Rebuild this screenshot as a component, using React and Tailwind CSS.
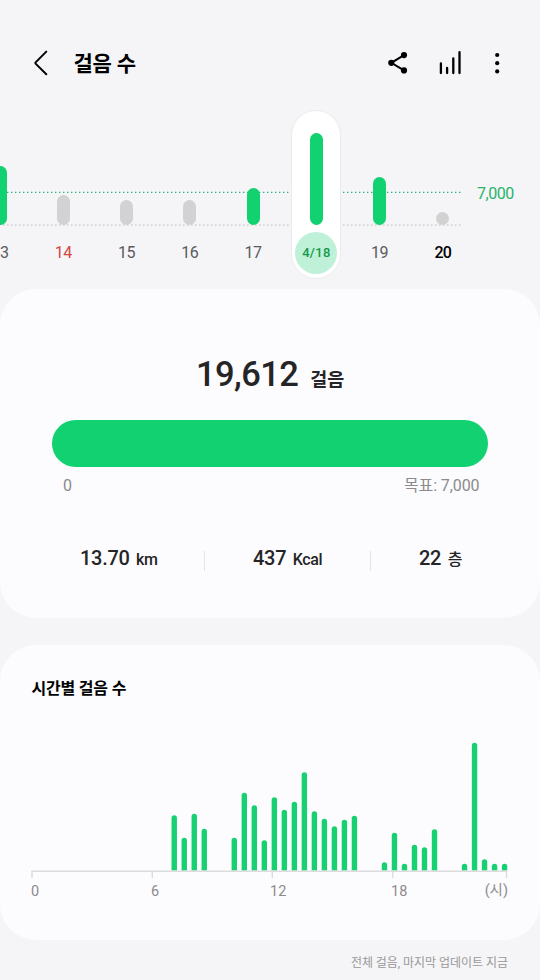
import { clsx } from "clsx";

const days = [
  { label: "13", height: 59, reached: true },
  { label: "14", height: 30, holiday: true },
  { label: "15", height: 25 },
  { label: "16", height: 25 },
  { label: "17", height: 37, reached: true },
  { label: "4/18", height: 92, reached: true, selected: true },
  { label: "19", height: 48, reached: true },
  { label: "20", height: 13, today: true },
];

// steps per half hour: [slot, bar height]
const halfHours = [
  [14, 55.5], [15, 33], [16, 57], [17, 42],
  [20, 33], [21, 78], [22, 65.5], [23, 30.5],
  [24, 73.5], [25, 61], [26, 69], [27, 98.5],
  [28, 59.5], [29, 52], [30, 44.5], [31, 51],
  [32, 55], [35, 8.5], [36, 38], [37, 7],
  [38, 26], [39, 23.5], [40, 41.5], [43, 7],
  [44, 128], [45, 11.5], [46, 7], [47, 7],
];

const ticks = [1, 121.3, 241.3, 361.8, 475.5];

function Header() {
  return (
    <header className="flex h-[46px] items-center pl-[32px] pr-[39px]">
      <button aria-label="Back">
        <svg width="18" height="28" viewBox="0 0 18 28" fill="none" stroke="#000" strokeWidth="2" strokeLinecap="round" strokeLinejoin="round">
          <path d="M14.3 2.6 L3.6 13.4 Q3 14 3.6 14.6 L14.3 25.2" />
        </svg>
      </button>
      <h1 className="mt-[3px] ml-[23.5px] text-[21px] leading-none font-bold tracking-[-0.2px] text-black">걸음 수</h1>
      <div className="ml-auto flex items-center">
        <button aria-label="Share">
          <svg width="22" height="24" viewBox="0 0 22 24" fill="#000">
            <path d="M17 4.1 L4.3 11.8 L17 19.4" fill="none" stroke="#000" strokeWidth="2" />
            <circle cx="17" cy="4.1" r="3.1" />
            <circle cx="4.3" cy="11.8" r="3.1" />
            <circle cx="17" cy="19.4" r="3.1" />
          </svg>
        </button>
        <button aria-label="Statistics" className="ml-[29px]">
          <svg width="24" height="26" viewBox="0 0 24 26" fill="none" stroke="#000" strokeWidth="2.3" strokeLinecap="round">
            <path d="M2.9 13.4 V23 M9.1 18 V23 M15.3 8.3 V23 M21.5 2.2 V23" />
          </svg>
        </button>
        <button aria-label="More options" className="ml-[31px]">
          <svg width="8" height="24" viewBox="0 0 8 24" fill="#000">
            <circle cx="4.2" cy="4" r="2.1" />
            <circle cx="4.2" cy="12.2" r="2.1" />
            <circle cx="4.2" cy="20.4" r="2.1" />
          </svg>
        </button>
      </div>
    </header>
  );
}

function Day({ day }) {
  return (
    <div className="flex w-[63.25px] shrink-0 justify-center">
      <div
        className={clsx(
          "flex h-[169px] w-[50px] flex-col items-center justify-end rounded-full border pb-[4px]",
          day.selected ? "border-[#ebebed] bg-white" : "border-transparent"
        )}
      >
        <div
          className={clsx("w-[13px] rounded-full", day.reached ? "bg-[#12d170]" : "bg-[#d2d2d2]")}
          style={{ height: day.height }}
        />
        <div
          className={clsx(
            "mt-[7px] flex size-[42px] items-center justify-center rounded-full",
            day.selected && "bg-[#bff0d8] text-[13px] font-medium tracking-[0.3px] text-[#14984a]",
            !day.selected && "text-[16px] tracking-[-0.3px]",
            day.holiday && "text-[#d0483e]",
            day.today && "font-medium tracking-[-0.6px] text-black",
            !day.selected && !day.holiday && !day.today && "text-[#5a5a5c]"
          )}
        >
          {day.label}
        </div>
      </div>
    </div>
  );
}

function DayStrip() {
  return (
    <section className="relative mt-[24px] h-[169px] overflow-hidden">
      <svg className="absolute top-0 left-0" width="540" height="169">
        <line x1="3" x2="462" y1="82.4" y2="82.4" stroke="#2fb577" strokeWidth="1.4" strokeDasharray="1.4 2.6" />
        <line x1="3" x2="462" y1="115" y2="115" stroke="#cfcfd1" strokeWidth="1.4" strokeDasharray="1.6 2.4" />
      </svg>
      <div className="relative ml-[-31.5px] flex">
        {days.map((day) => (
          <Day key={day.label} day={day} />
        ))}
        <span className="mt-[74px] ml-[2.5px] text-[16px] leading-[19px] tracking-[-0.45px] text-[#27b36b]">7,000</span>
      </div>
    </section>
  );
}

function Stat({ value, unit, className }) {
  return (
    <div className={clsx("flex items-baseline text-[#252528]", className)}>
      <span className="text-[20px] leading-6 font-medium tracking-[-0.3px]">{value}</span>
      <span className="ml-[6.5px] text-[16px] font-medium tracking-[-0.35px]">{unit}</span>
    </div>
  );
}

function StepSummary() {
  return (
    <section className="mt-[10px] h-[329px] rounded-[36px] bg-[#fcfcfe] pt-[65px]">
      <div className="flex items-baseline pl-[196px] text-[#252528]">
        <span className="text-[34.5px] leading-[41px] font-medium tracking-[-0.6px]">19,612</span>
        <span className="ml-[12px] text-[18.5px] leading-none font-bold">걸음</span>
      </div>
      <div className="mx-[52px] mt-[25px] h-[47px] rounded-full bg-[#12d170]" />
      <div className="mt-[9px] flex justify-between pr-[60.5px] pl-[63px] text-[16px] leading-[20px] tracking-[-0.1px] text-[#8b8b8d]">
        <span>0</span>
        <span>목표: 7,000</span>
      </div>
      <div className="mt-[51px] flex h-[24px] items-center">
        <Stat value="13.70" unit="km" className="w-[204px] pl-[80px]" />
        <div className="mt-[3px] h-[20px] w-px bg-[#e4e4e6]" />
        <Stat value="437" unit="Kcal" className="w-[165px] pl-[48px]" />
        <div className="mt-[3px] h-[20px] w-px bg-[#e4e4e6]" />
        <Stat value="22" unit="층" className="pl-[48px]" />
      </div>
    </section>
  );
}

function HourlySteps() {
  return (
    <section className="mt-[27px] h-[295px] rounded-[36px] bg-[#fcfcfe] px-[31px] pt-[34px]">
      <h2 className="pl-[0.5px] text-[16px] leading-[20px] font-bold tracking-[-0.2px] text-black">시간별 걸음 수</h2>
      <svg className="mt-[41px] block" width="478" height="140" viewBox="0 0 478 140">
        {halfHours.map(([slot, height]) => {
          const x = 0.4 + slot * 10.01;
          const top = 130.7 - height;
          return (
            <path
              key={slot}
              d={`M${x} 130.5 V${top + 2.7} a2.7 2.7 0 0 1 5.4 0 V130.5 Z`}
              fill="#16d071"
            />
          );
        })}
        <path d="M0.4 131.2 H476.2" stroke="#dcdcde" strokeWidth="1.5" />
        {ticks.map((x) => (
          <path key={x} d={`M${x} 131 V138`} stroke="#dcdcde" strokeWidth="1.4" />
        ))}
      </svg>
      <div className="mt-[2px] flex text-[14.5px] leading-[20px] text-[#8b8b8d]">
        <span className="w-[120px]">0</span>
        <span className="w-[119px]">6</span>
        <span className="w-[121px]">12</span>
        <span>18</span>
        <span className="mt-[-1px] ml-auto pr-px">(시)</span>
      </div>
    </section>
  );
}

export default function App() {
  return (
    <div className="h-[980px] w-[540px] overflow-hidden bg-[#f5f5f7] pt-[40px] font-[Roboto,'Noto_Sans_CJK_KR',sans-serif]">
      <Header />
      <DayStrip />
      <StepSummary />
      <HourlySteps />
      <p className="mt-[14px] pr-[32px] text-right text-[12px] leading-[18px] tracking-[-0.04px] text-[#98989a]">
        전체 걸음, 마지막 업데이트 지금
      </p>
    </div>
  );
}
